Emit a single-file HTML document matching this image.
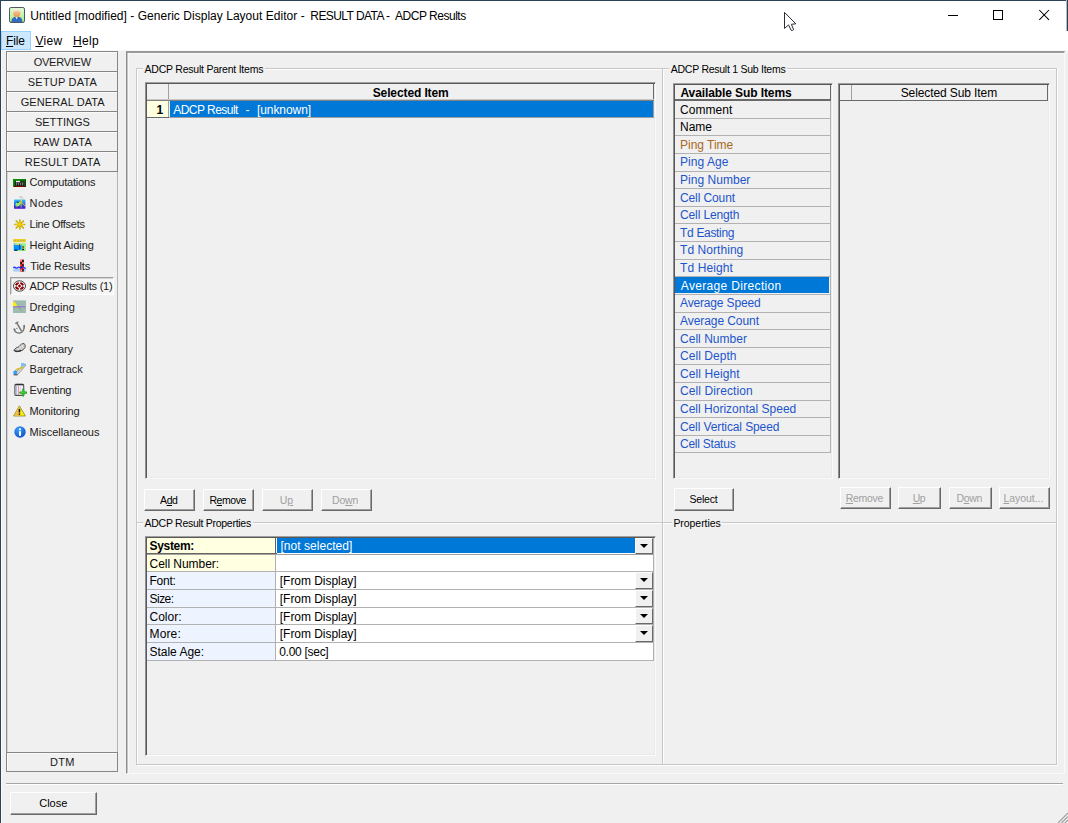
<!DOCTYPE html>
<html><head><meta charset="utf-8"><title>Generic Display Layout Editor</title>
<style>
html,body{margin:0;padding:0;}
body{width:1068px;height:823px;overflow:hidden;background:#f0f0f0;font-family:"Liberation Sans",sans-serif;font-size:12px;color:#000;position:relative;}
div,span{position:absolute;box-sizing:border-box;white-space:nowrap;}
u{text-decoration:underline;text-underline-offset:1px;}
.nb{left:6px;width:112px;height:20px;border:1px solid #858585;background:#f0f0f0;box-shadow:inset 1px 1px 0 #fafafa;}
.hl{height:1px;background:#dcdcdc;}
.vl{width:1px;background:#dcdcdc;}
.btn{height:22px;background:#f0f0f0;border-top:1px solid #fff;border-left:1px solid #fff;border-right:1px solid #696969;border-bottom:1px solid #696969;box-shadow:inset -1px -1px 0 #a0a0a0;}
.grid{border-top:1px solid #a0a0a0;border-left:1px solid #909090;border-right:1px solid #fafafa;border-bottom:1px solid #fafafa;background:#f0f0f0;box-shadow:inset 1px 1px 0 #585858,inset -1px -1px 0 #eaeaea;}
.x{line-height:16px;height:16px;}
</style></head>
<body>
<div style="left:0;top:0;width:1068px;height:50px;background:#fff;"></div>
<div style="left:0;top:50px;width:1068px;height:1px;background:#f8f8f8;"></div>
<div style="left:0;top:0;width:1068px;height:1px;background:#2b4257;"></div>
<div style="left:0;top:0;width:1px;height:823px;background:#2b4257;"></div>
<div style="left:1066px;top:0;width:1px;height:31px;background:#b4bcc4;"></div>
<div style="left:1067px;top:0;width:1px;height:31px;background:#2b4257;"></div>
<svg style="position:absolute;left:9px;top:7px" width="16" height="16" viewBox="0 0 16 16"><defs><linearGradient id="ag" x1="0" y1="0" x2="0" y2="1"><stop offset="0" stop-color="#e4fbd6"/><stop offset="1" stop-color="#a4ee84"/></linearGradient><linearGradient id="ah" x1="0" y1="0" x2="0" y2="1"><stop offset="0" stop-color="#f3e4d3"/><stop offset="0.45" stop-color="#f6b47c"/><stop offset="1" stop-color="#ee9550"/></linearGradient></defs><rect x="0.5" y="0.5" width="15" height="15" rx="1.6" fill="url(#ag)" stroke="#4d5866" stroke-width="1"/><path d="M2.2 15 Q2.6 10.4 6.4 9.8 L9.6 9.8 Q13.2 10.4 13.6 15 Z" fill="#336cbc"/><path d="M6.3 9.8 L7.6 12.6 L8.9 9.8 Z" fill="#e6eef8"/><ellipse cx="7.8" cy="6.2" rx="3.5" ry="3.9" fill="url(#ah)"/><path d="M4.3 5 Q4.6 1.8 7.8 1.8 Q11 1.8 11.3 5 Q9.6 3.7 7.8 3.9 Q6 3.7 4.3 5Z" fill="#efe8de"/></svg>
<div class="x" style="left:30.3px;top:7.7px;letter-spacing:0.03px;">Untitled [modified] - Generic Display Layout Editor -</div>
<div class="x" style="left:310.3px;top:7.7px;letter-spacing:-0.57px;">RESULT DATA -</div>
<div class="x" style="left:395.0px;top:7.7px;letter-spacing:-0.48px;">ADCP Results</div>
<div style="left:948px;top:15px;width:10px;height:1px;background:#000;"></div>
<div style="left:993px;top:10px;width:10px;height:10px;border:1px solid #000;"></div>
<svg style="position:absolute;left:1038px;top:8px" width="13" height="13" viewBox="1038 8 13 13"><path d="M1039.3 10 L1049 19.8 M1049 10 L1039.3 19.8" stroke="#000" stroke-width="1.05" fill="none"/></svg>
<svg style="position:absolute;left:780px;top:8px" width="20" height="26" viewBox="780 8 20 26"><path d="M784.5 12.4 L784.5 28.4 L788.6 24.9 L791.1 30.3 Q792.4 30.9 793.6 29.7 L791.4 24.3 L795.8 23.8 Z" fill="#fff" stroke="#14141e" stroke-width="0.9" stroke-linejoin="round"/></svg>
<div style="left:1px;top:31px;width:30px;height:19px;background:#cce8ff;border:1px solid #99d1ff;"></div>
<div class="x" style="left:6.0px;top:33.4px;letter-spacing:-0.15px;"><u>F</u>ile</div>
<div class="x" style="left:35.4px;top:33.4px;letter-spacing:0.33px;"><u>V</u>iew</div>
<div class="x" style="left:72.9px;top:33.4px;letter-spacing:0.37px;"><u>H</u>elp</div>
<div class="nb" style="top:51px;height:21px;"></div>
<div class="x" style="left:33.7px;top:54.1px;font-size:11px;color:#1a1a1a;letter-spacing:-0.24px;">OVERVIEW</div>
<div class="nb" style="top:71px;height:21px;"></div>
<div class="x" style="left:27.8px;top:74.1px;font-size:11px;color:#1a1a1a;letter-spacing:0.21px;">SETUP DATA</div>
<div class="nb" style="top:91px;height:21px;"></div>
<div class="x" style="left:20.7px;top:94.1px;font-size:11px;color:#1a1a1a;letter-spacing:0.10px;">GENERAL DATA</div>
<div class="nb" style="top:111px;height:21px;"></div>
<div class="x" style="left:34.9px;top:114.1px;font-size:11px;color:#1a1a1a;letter-spacing:-0.02px;">SETTINGS</div>
<div class="nb" style="top:131px;height:21px;"></div>
<div class="x" style="left:33.4px;top:134.1px;font-size:11px;color:#1a1a1a;letter-spacing:0.33px;">RAW DATA</div>
<div class="nb" style="top:151px;height:21px;"></div>
<div class="x" style="left:24.7px;top:154.1px;font-size:11px;color:#1a1a1a;letter-spacing:0.25px;">RESULT DATA</div>
<div class="nb" style="top:752px;"></div>
<div class="x" style="left:49.9px;top:754.1px;font-size:11px;color:#1a1a1a;letter-spacing:0.34px;">DTM</div>
<div style="left:1px;top:51px;width:1px;height:772px;background:#fafafa;"></div>
<div style="left:6px;top:172px;width:1px;height:580px;background:#8e8e8e;"></div>
<div style="left:7px;top:172px;width:1px;height:580px;background:#d4d4d4;"></div>
<div style="left:117px;top:172px;width:1px;height:580px;background:#b4b4b4;"></div>
<svg style="position:absolute;left:13px;top:179px" width="13" height="8" viewBox="0 0 13 8"><rect x="0" y="0" width="13" height="8" fill="#009000"/><rect x="1.8" y="1.7" width="9.6" height="5.2" fill="#0a0a0a"/><rect x="12.2" y="0.6" width="0.8" height="7.4" fill="#202020"/><rect x="1" y="7" width="11.4" height="1" fill="#800000"/><rect x="2.8" y="1.8" width="4.4" height="1.5" fill="#f0f0f0"/><rect x="8.2" y="2.6" width="2.6" height="0.8" fill="#808040"/><path d="M2.8 4.3 H10.8 M2.8 5.8 H10.8" stroke="#b0b0b0" stroke-width="0.9" stroke-dasharray="1.3 0.8"/></svg>
<div class="x" style="left:29.6px;top:174.3px;font-size:11px;color:#202020;letter-spacing:-0.18px;">Computations</div>
<svg style="position:absolute;left:13px;top:196px" width="13" height="13" viewBox="0 0 13 13"><defs><linearGradient id="ng" x1="0" y1="0" x2="0" y2="1"><stop offset="0" stop-color="#30c8ff"/><stop offset="0.55" stop-color="#2860e8"/><stop offset="1" stop-color="#2a10c8"/></linearGradient></defs><rect x="1" y="3.4" width="11.4" height="9" rx="0.8" fill="url(#ng)"/><rect x="1" y="11.6" width="11.4" height="1" fill="#6a20d8"/><path d="M2.2 9.8 Q2.6 6 5 6.4 Q7 5.4 8 7.2 L6 10.2 Z" fill="#80f080"/><path d="M3.2 11.4 L7.8 6.4 L8.2 3.4 L8.7 6.4 L12.4 10.4 M8.2 4 V11.6" stroke="#f0d020" stroke-width="0.85" fill="none"/><path d="M6.6 0.8 Q9 0.6 10.2 2.6" stroke="#a0a0a0" stroke-width="0.8" fill="none"/><rect x="3.6" y="5.8" width="2" height="0.9" fill="#101010"/></svg>
<div class="x" style="left:29.6px;top:195.1px;font-size:11px;color:#202020;letter-spacing:0.35px;">Nodes</div>
<svg style="position:absolute;left:14px;top:219px" width="12" height="11" viewBox="0 0 12 11"><g stroke="#b0a000" stroke-width="1.5" stroke-linecap="round"><path d="M5.8 0.9 V10.1 M0.9 5.5 H10.7 M2.2 2 L9.4 9 M9.4 2 L2.2 9"/></g><g stroke="#f0d000" stroke-width="0.9" stroke-linecap="round"><path d="M5.8 1.6 V9.4 M1.6 5.5 H10 M2.8 2.6 L8.8 8.4 M8.8 2.6 L2.8 8.4"/></g><circle cx="5.6" cy="5.4" r="1.8" fill="#f8c800"/></svg>
<div class="x" style="left:29.6px;top:215.9px;font-size:11px;color:#202020;letter-spacing:-0.29px;">Line Offsets</div>
<svg style="position:absolute;left:13px;top:239px" width="13" height="13" viewBox="0 0 13 13"><rect x="0" y="0" width="13" height="3.2" rx="1" fill="#e8d020"/><path d="M1.5 1.6 H11.5" stroke="#c0a878" stroke-width="1" stroke-dasharray="1.6 1.2"/><rect x="0.8" y="4.4" width="12" height="7.6" fill="#90f088"/><path d="M0.8 6 Q3 5.2 5 6 T8.6 5.4 L8.6 10.8 L2 11.6 L0.8 11.4Z" fill="#0090ff"/><rect x="0.8" y="4.4" width="1.2" height="1.2" fill="#40a0ff"/><path d="M2 5.6 H7.4" stroke="#e8d040" stroke-width="0.9"/><rect x="6" y="5.2" width="0.8" height="5" fill="#203080"/><rect x="9.2" y="7" width="1.8" height="2.6" fill="#a06020"/><rect x="9" y="10" width="2" height="1.2" fill="#202020"/><rect x="1.4" y="10.6" width="3" height="1.2" fill="#101050"/></svg>
<div class="x" style="left:29.6px;top:236.7px;font-size:11px;color:#202020;letter-spacing:-0.04px;">Height Aiding</div>
<svg style="position:absolute;left:13px;top:259px" width="13" height="13" viewBox="0 0 13 13"><rect x="0.4" y="9.2" width="12.4" height="3.4" fill="#a8d0f4"/><rect x="7.2" y="0.6" width="3.6" height="12" fill="#ff2020"/><g fill="#202020"><rect x="9" y="0.8" width="1.8" height="2.2"/><rect x="7.2" y="3" width="1.8" height="2.2"/><rect x="9" y="5.2" width="1.8" height="2.2"/><rect x="7.2" y="7.4" width="1.8" height="1.6"/><rect x="9" y="10.2" width="1.8" height="2.2"/></g><g fill="#ffffff"><rect x="7.8" y="1.2" width="1" height="1"/><rect x="9.4" y="3.6" width="1" height="1"/><rect x="7.8" y="10.8" width="1" height="1"/></g><path d="M0.4 9 Q1.4 7.4 2.4 8.6 T4.6 8.6 T6.8 8.6 T9 8.6 T11.2 8.6 T12.8 8.8" stroke="#2020ff" stroke-width="1.2" fill="none"/></svg>
<div class="x" style="left:30.2px;top:257.5px;font-size:11px;color:#202020;letter-spacing:-0.05px;">Tide Results</div>
<div style="left:10px;top:277px;width:104px;height:18px;background:#f5f5f5;border-top:1px solid #a0a0a0;border-left:1px solid #a0a0a0;border-right:1px solid #fff;border-bottom:1px solid #fff;box-shadow:inset 1px 1px 0 #d4d4d4;"></div>
<svg style="position:absolute;left:13px;top:280px" width="13" height="12" viewBox="0 0 13 12"><ellipse cx="6.5" cy="6" rx="6" ry="5.2" fill="#fff" stroke="#404040" stroke-width="1"/><g fill="#8c0000"><path d="M1.9 5 Q2.4 2.6 5.4 1.9 L6 3.6 L3.6 5.8Z"/><path d="M11.1 5 Q10.6 2.6 7.6 1.9 L7 3.6 L9.4 5.8Z"/><path d="M1.9 7 Q2.4 9.4 5.4 10.1 L6 8.4 L3.6 6.2Z"/><path d="M11.1 7 Q10.6 9.4 7.6 10.1 L7 8.4 L9.4 6.2Z"/><path d="M6.5 4.3 L8.2 6 L6.5 7.7 L4.8 6Z"/></g></svg>
<div class="x" style="left:29.6px;top:278.3px;font-size:11px;color:#202020;letter-spacing:-0.24px;">ADCP Results (1)</div>
<svg style="position:absolute;left:13px;top:300px" width="13" height="13" viewBox="0 0 13 13"><rect x="0" y="0.4" width="13" height="12.6" fill="#9cbcb0"/><path d="M0 1.8 L1.8 1.8 L4.6 6.4 L0 6.6Z" fill="#f8f000"/><path d="M0 7.2 L5 6.6 L12.6 6.8" stroke="#a078d0" stroke-width="1.2" fill="none"/><path d="M5 6.8 L9 11" stroke="#80a060" stroke-width="1" fill="none"/><g fill="#c0b0c8"><rect x="2" y="2" width="1" height="1"/><rect x="6" y="3" width="1" height="1"/><rect x="9" y="2" width="1" height="1"/><rect x="3" y="9" width="1" height="1"/><rect x="8" y="9.6" width="1" height="1"/><rect x="10.6" y="4" width="1" height="1"/><rect x="11" y="10.6" width="1" height="1"/><rect x="5.4" y="11" width="1" height="1"/></g></svg>
<div class="x" style="left:29.6px;top:299.1px;font-size:11px;color:#202020;letter-spacing:0.08px;">Dredging</div>
<svg style="position:absolute;left:13px;top:321px" width="13" height="14" viewBox="0 0 13 14"><g fill="none" stroke="#7c7c7c" stroke-linecap="round"><path d="M3.6 1.6 Q5.4 4.6 8.2 9.6" stroke-width="1.6"/><path d="M1.2 8.2 Q2.6 12.6 7 12 Q11.2 11 11.4 4.6" stroke-width="1.5"/><path d="M2.6 2.4 L5 1" stroke-width="1.2"/></g><path d="M10.6 3.6 L12.2 6.4 L10.4 6.6Z M0.6 7.6 L2.8 8 L1.4 10Z" fill="#707070"/><circle cx="3.9" cy="7.4" r="0.7" fill="#808080"/></svg>
<div class="x" style="left:29.6px;top:319.9px;font-size:11px;color:#202020;letter-spacing:-0.16px;">Anchors</div>
<svg style="position:absolute;left:13px;top:342px" width="13" height="12" viewBox="0 0 13 12"><path d="M0.8 8.4 Q2.4 5.6 6 4.6 Q8 1.2 11 1.4 Q13 3 12 5.6 Q10.6 8.4 7 9.2 Q3 10.6 0.8 8.4Z" fill="#c8c8c8" stroke="#585858" stroke-width="1"/><path d="M1.6 8.8 Q4.6 10 8.2 8.4" stroke="#303030" stroke-width="1.2" fill="none"/><path d="M4.4 6 L5.6 8 M6.6 4.6 L8 7 M8.6 2.8 L10 5.6" stroke="#f4f4f4" stroke-width="0.9"/></svg>
<div class="x" style="left:29.6px;top:340.6px;font-size:11px;color:#202020;letter-spacing:-0.18px;">Catenary</div>
<svg style="position:absolute;left:13px;top:362px" width="13" height="14" viewBox="0 0 13 14"><path d="M1 12.6 L4.4 12.8 L12.2 4 L12.6 2.2 L10 3.4 L4 9Z" fill="#d8d8d0" stroke="#8a8a80" stroke-width="0.8"/><path d="M2 8.8 Q4.6 6.2 7 6.2 Q9 6 10 4.2" stroke="#d8c020" stroke-width="1.4" fill="none"/><rect x="8" y="1" width="3.6" height="3.4" fill="#80c0f8"/><circle cx="2.2" cy="10.4" r="2" fill="#30a0ff"/><path d="M0.6 12.8 H4.6" stroke="#404040" stroke-width="0.9"/></svg>
<div class="x" style="left:29.6px;top:361.4px;font-size:11px;color:#202020;letter-spacing:-0.00px;">Bargetrack</div>
<svg style="position:absolute;left:14px;top:383px" width="13" height="14" viewBox="0 0 13 14"><rect x="0.9" y="1.4" width="8.8" height="11" rx="1" fill="#eef4fb" stroke="#505050" stroke-width="1.1"/><path d="M1.4 1.6 H9.2" stroke="#303030" stroke-width="1.4"/><path d="M4.4 2.6 V12" stroke="#f08080" stroke-width="0.9"/><path d="M2.4 2.6 V12" stroke="#a0a8e8" stroke-width="0.8"/><path d="M6.6 2.6 V8" stroke="#c8d8f0" stroke-width="0.9"/><path d="M9.2 6.6 V12.6 M6.2 9.6 H12.2" stroke="#20a020" stroke-width="2.2" stroke-linecap="round"/><path d="M9 7 V12 M6.8 9.4 H11.6" stroke="#50d040" stroke-width="0.9" stroke-linecap="round"/></svg>
<div class="x" style="left:29.6px;top:382.2px;font-size:11px;color:#202020;letter-spacing:-0.13px;">Eventing</div>
<svg style="position:absolute;left:13px;top:405px" width="13" height="12" viewBox="0 0 13 12"><path d="M6.4 0.8 L12.4 11 L0.6 11Z" fill="#f8f000" stroke="#98903c" stroke-width="0.9" stroke-linejoin="round"/><path d="M6.4 1.2 L6.4 10.6 L1.2 10.6Z" fill="#f8b850"/><rect x="5.7" y="3.8" width="1.5" height="3.8" rx="0.6" fill="#101010"/><rect x="5.7" y="8.4" width="1.5" height="1.4" fill="#101010"/></svg>
<div class="x" style="left:29.6px;top:403.0px;font-size:11px;color:#202020;letter-spacing:-0.14px;">Monitoring</div>
<svg style="position:absolute;left:14px;top:426px" width="12" height="12" viewBox="0 0 12 12"><defs><radialGradient id="mg" cx="0.4" cy="0.3" r="0.8"><stop offset="0" stop-color="#3aa0ff"/><stop offset="1" stop-color="#0848c8"/></radialGradient></defs><circle cx="6" cy="6" r="5.7" fill="url(#mg)"/><rect x="5" y="2.4" width="2" height="1.8" fill="#fff"/><rect x="5" y="5.2" width="2" height="4.6" fill="#fff"/></svg>
<div class="x" style="left:29.6px;top:423.8px;font-size:11px;color:#202020;letter-spacing:0.01px;">Miscellaneous</div>
<div style="left:126px;top:51px;width:939px;height:723px;border-top:2px solid #9a9a9a;border-left:1px solid #8e8e8e;border-right:1px solid #fafafa;border-bottom:1px solid #fafafa;box-shadow:inset 1px 0 0 #c4c4c4, inset 2px 1px 0 #f8f8f8;"></div>
<div style="left:136px;top:68px;width:527px;height:455px;border:1px solid #c8c8c8;box-shadow:1px 1px 0 #fcfcfc,inset 1px 1px 0 #fcfcfc;"></div>
<div style="left:143px;top:68px;width:122px;height:2px;background:#f0f0f0;"></div>
<div class="x" style="left:144.6px;top:61.2px;font-size:10.5px;letter-spacing:-0.23px;">ADCP Result Parent Items</div>
<div style="left:136px;top:522px;width:527px;height:243px;border:1px solid #c8c8c8;box-shadow:1px 1px 0 #fcfcfc,inset 1px 1px 0 #fcfcfc;"></div>
<div style="left:143px;top:522px;width:110px;height:2px;background:#f0f0f0;"></div>
<div class="x" style="left:144.6px;top:515.2px;font-size:10.5px;letter-spacing:-0.28px;">ADCP Result Properties</div>
<div style="left:662px;top:68px;width:395px;height:455px;border:1px solid #c8c8c8;box-shadow:1px 1px 0 #fcfcfc,inset 1px 1px 0 #fcfcfc;"></div>
<div style="left:669px;top:68px;width:118px;height:2px;background:#f0f0f0;"></div>
<div class="x" style="left:670.8px;top:61.2px;font-size:10.5px;letter-spacing:-0.26px;">ADCP Result 1 Sub Items</div>
<div style="left:662px;top:522px;width:395px;height:243px;border:1px solid #c8c8c8;box-shadow:1px 1px 0 #fcfcfc,inset 1px 1px 0 #fcfcfc;"></div>
<div style="left:672px;top:522px;width:50px;height:2px;background:#f0f0f0;"></div>
<div class="x" style="left:673.4px;top:515.2px;font-size:10.5px;letter-spacing:-0.05px;">Properties</div>
<div class="grid" style="left:145px;top:82px;width:511px;height:397px;"></div>
<div style="left:653px;top:84px;width:1px;height:17px;background:#696969;"></div>
<div style="left:653px;top:101px;width:1px;height:17px;background:#a0a0a0;"></div>
<div style="left:168px;top:84px;width:1px;height:34px;background:#a0a0a0;"></div>
<div style="left:147px;top:100px;width:507px;height:1px;background:#808080;"></div>
<div style="left:147px;top:99px;width:507px;height:1px;background:#c8c8c8;"></div>
<div class="x" style="left:372.7px;top:85.1px;font-weight:bold;letter-spacing:-0.11px;">Selected Item</div>
<div style="left:147px;top:101px;width:21px;height:16px;background:#ffffe1;"></div>
<div style="left:147px;top:117px;width:22px;height:1px;background:#696969;"></div>
<div class="x" style="left:156.4px;top:101.9px;font-weight:bold;letter-spacing:0.00px;">1</div>
<div style="left:170px;top:101px;width:483px;height:16px;background:#0078d7;"></div>
<div style="left:169px;top:117px;width:485px;height:1px;background:#a0a0a0;"></div>
<div class="x" style="left:173.2px;top:101.9px;color:#fff;letter-spacing:-0.53px;">ADCP Result</div>
<div class="x" style="left:245.4px;top:101.9px;color:#fff;letter-spacing:0.00px;">-</div>
<div class="x" style="left:256.9px;top:101.9px;color:#fff;letter-spacing:-0.05px;">[unknown]</div>
<div class="btn" style="left:144px;top:489px;width:51px;height:22px;"></div>
<div class="x" style="left:160.1px;top:491.6px;font-size:10.5px;letter-spacing:-0.45px;">A<u>d</u>d</div>
<div class="btn" style="left:203px;top:489px;width:51px;height:22px;"></div>
<div class="x" style="left:209.4px;top:491.6px;font-size:10.5px;letter-spacing:-0.42px;">R<u>e</u>move</div>
<div class="btn" style="left:262px;top:489px;width:51px;height:22px;"></div>
<div class="x" style="left:279.8px;top:491.6px;font-size:10.5px;color:#a0a0a0;letter-spacing:-0.04px;">U<u>p</u></div>
<div class="btn" style="left:321px;top:489px;width:51px;height:22px;"></div>
<div class="x" style="left:332.0px;top:491.6px;font-size:10.5px;color:#a0a0a0;letter-spacing:-0.16px;">Do<u>w</u>n</div>
<div class="btn" style="left:674px;top:488px;width:60px;height:23px;"></div>
<div class="x" style="left:689.4px;top:491.1px;font-size:10.5px;letter-spacing:-0.16px;">Select</div>
<div class="btn" style="left:840px;top:487px;width:51px;height:22px;"></div>
<div class="x" style="left:845.7px;top:489.6px;font-size:10.5px;color:#a0a0a0;letter-spacing:-0.28px;"><u>R</u>emove</div>
<div class="btn" style="left:898px;top:487px;width:43px;height:22px;"></div>
<div class="x" style="left:912.7px;top:489.6px;font-size:10.5px;color:#a0a0a0;letter-spacing:-0.44px;"><u>U</u>p</div>
<div class="btn" style="left:949px;top:487px;width:43px;height:22px;"></div>
<div class="x" style="left:956.4px;top:489.6px;font-size:10.5px;color:#a0a0a0;letter-spacing:-0.29px;">D<u>o</u>wn</div>
<div class="btn" style="left:999px;top:487px;width:51px;height:22px;"></div>
<div class="x" style="left:1003.4px;top:489.6px;font-size:10.5px;color:#a0a0a0;letter-spacing:-0.04px;"><u>L</u>ayout...</div>
<div class="grid" style="left:673px;top:83px;width:160px;height:396px;"></div>
<div style="left:675px;top:85px;width:156px;height:16px;border-right:1px solid #696969;border-bottom:2px solid #696969;"></div>
<div class="x" style="left:680.5px;top:85.1px;font-weight:bold;letter-spacing:-0.10px;">Available Sub Items</div>
<div style="left:675px;top:118px;width:156px;height:1px;background:#b2b2b2;"></div>
<div class="x" style="left:680.0px;top:101.5px;letter-spacing:0.05px;">Comment</div>
<div style="left:675px;top:135px;width:156px;height:1px;background:#b2b2b2;"></div>
<div class="x" style="left:680.0px;top:119.2px;letter-spacing:-0.01px;">Name</div>
<div style="left:675px;top:153px;width:156px;height:1px;background:#b2b2b2;"></div>
<div class="x" style="left:680.0px;top:136.8px;color:#a96a1e;letter-spacing:-0.02px;">Ping Time</div>
<div style="left:675px;top:171px;width:156px;height:1px;background:#b2b2b2;"></div>
<div class="x" style="left:680.0px;top:154.4px;color:#1d55cc;letter-spacing:0.05px;">Ping Age</div>
<div style="left:675px;top:188px;width:156px;height:1px;background:#b2b2b2;"></div>
<div class="x" style="left:680.0px;top:172.0px;color:#1d55cc;letter-spacing:0.03px;">Ping Number</div>
<div style="left:675px;top:206px;width:156px;height:1px;background:#b2b2b2;"></div>
<div class="x" style="left:680.0px;top:189.6px;color:#1d55cc;letter-spacing:-0.11px;">Cell Count</div>
<div style="left:675px;top:223px;width:156px;height:1px;background:#b2b2b2;"></div>
<div class="x" style="left:680.0px;top:207.2px;color:#1d55cc;letter-spacing:-0.12px;">Cell Length</div>
<div style="left:675px;top:241px;width:156px;height:1px;background:#b2b2b2;"></div>
<div class="x" style="left:680.0px;top:224.8px;color:#1d55cc;letter-spacing:-0.32px;">Td Easting</div>
<div style="left:675px;top:259px;width:156px;height:1px;background:#b2b2b2;"></div>
<div class="x" style="left:680.0px;top:242.4px;color:#1d55cc;letter-spacing:0.06px;">Td Northing</div>
<div style="left:675px;top:276px;width:156px;height:1px;background:#b2b2b2;"></div>
<div class="x" style="left:680.0px;top:260.0px;color:#1d55cc;letter-spacing:0.10px;">Td Height</div>
<div style="left:675px;top:277px;width:154px;height:16px;background:#0078d7;"></div>
<div style="left:675px;top:294px;width:156px;height:1px;background:#b2b2b2;"></div>
<div class="x" style="left:680.8px;top:278.2px;color:#fff;letter-spacing:0.33px;">Average Direction</div>
<div style="left:675px;top:312px;width:156px;height:1px;background:#b2b2b2;"></div>
<div class="x" style="left:680.0px;top:295.3px;color:#1d55cc;letter-spacing:-0.16px;">Average Speed</div>
<div style="left:675px;top:329px;width:156px;height:1px;background:#b2b2b2;"></div>
<div class="x" style="left:680.0px;top:312.9px;color:#1d55cc;letter-spacing:-0.07px;">Average Count</div>
<div style="left:675px;top:347px;width:156px;height:1px;background:#b2b2b2;"></div>
<div class="x" style="left:680.0px;top:330.5px;color:#1d55cc;letter-spacing:0.03px;">Cell Number</div>
<div style="left:675px;top:364px;width:156px;height:1px;background:#b2b2b2;"></div>
<div class="x" style="left:680.0px;top:348.1px;color:#1d55cc;letter-spacing:0.05px;">Cell Depth</div>
<div style="left:675px;top:382px;width:156px;height:1px;background:#b2b2b2;"></div>
<div class="x" style="left:680.0px;top:365.7px;color:#1d55cc;letter-spacing:0.08px;">Cell Height</div>
<div style="left:675px;top:400px;width:156px;height:1px;background:#b2b2b2;"></div>
<div class="x" style="left:680.0px;top:383.3px;color:#1d55cc;letter-spacing:0.10px;">Cell Direction</div>
<div style="left:675px;top:417px;width:156px;height:1px;background:#b2b2b2;"></div>
<div class="x" style="left:680.0px;top:400.9px;color:#1d55cc;letter-spacing:0.01px;">Cell Horizontal Speed</div>
<div style="left:675px;top:435px;width:156px;height:1px;background:#b2b2b2;"></div>
<div class="x" style="left:680.0px;top:418.5px;color:#1d55cc;letter-spacing:-0.11px;">Cell Vertical Speed</div>
<div style="left:675px;top:452px;width:156px;height:1px;background:#b2b2b2;"></div>
<div class="x" style="left:680.0px;top:436.1px;color:#1d55cc;letter-spacing:-0.24px;">Cell Status</div>
<div style="left:830px;top:101px;width:1px;height:351px;background:#b2b2b2;"></div>
<div class="grid" style="left:838px;top:83px;width:212px;height:396px;"></div>
<div style="left:840px;top:85px;width:208px;height:16px;border-right:1px solid #696969;border-bottom:1px solid #696969;"></div>
<div style="left:851px;top:85px;width:1px;height:15px;background:#a0a0a0;"></div>
<div class="x" style="left:900.7px;top:85.1px;letter-spacing:-0.10px;">Selected Sub Item</div>
<div class="grid" style="left:145px;top:536px;width:511px;height:220px;"></div>
<div style="left:147px;top:538px;width:128px;height:16px;background:#ffffe1;"></div>
<div style="left:276px;top:538px;width:377px;height:16px;background:#fff;"></div>
<div style="left:277px;top:538px;width:358px;height:15px;background:#0078d7;"></div>
<div class="x" style="left:149.5px;top:538.0px;font-weight:bold;letter-spacing:-0.31px;">System:</div>
<div class="x" style="left:280.5px;top:538.0px;color:#fff;letter-spacing:0.03px;">[not selected]</div>
<div style="left:147px;top:553px;width:130px;height:1px;background:#666;"></div>
<div style="left:147px;top:554px;width:130px;height:1px;background:#a4a49c;"></div>
<div style="left:277px;top:554px;width:377px;height:1px;background:#a0a0a0;"></div>
<div style="left:275px;top:538px;width:1px;height:16px;background:#606060;"></div>
<div style="left:635px;top:538px;width:18px;height:16px;background:#f0f0f0;border-top:1px solid #fff;border-left:1px solid #fff;border-right:1px solid #696969;border-bottom:1px solid #696969;"></div>
<svg style="position:absolute;left:640px;top:544px" width="8" height="4" viewBox="0 0 8 4"><path d="M0 0 H8 L4 4Z" fill="#000"/></svg>
<div style="left:147px;top:555px;width:128px;height:16px;background:#ffffe1;"></div>
<div style="left:276px;top:555px;width:377px;height:16px;background:#fff;"></div>
<div class="x" style="left:149.5px;top:555.6px;letter-spacing:-0.04px;">Cell Number:</div>
<div style="left:147px;top:571px;width:507px;height:1px;background:#b2b2b2;"></div>
<div style="left:147px;top:572px;width:128px;height:17px;background:#eef4ff;"></div>
<div style="left:276px;top:572px;width:377px;height:17px;background:#fff;"></div>
<div class="x" style="left:149.5px;top:573.2px;letter-spacing:-0.24px;">Font:</div>
<div class="x" style="left:279.8px;top:573.2px;letter-spacing:-0.04px;">[From Display]</div>
<div style="left:147px;top:589px;width:507px;height:1px;background:#b2b2b2;"></div>
<div style="left:635px;top:572px;width:18px;height:17px;background:#f0f0f0;border-top:1px solid #fff;border-left:1px solid #fff;border-right:1px solid #696969;border-bottom:1px solid #696969;"></div>
<svg style="position:absolute;left:640px;top:578px" width="8" height="4" viewBox="0 0 8 4"><path d="M0 0 H8 L4 4Z" fill="#000"/></svg>
<div style="left:147px;top:590px;width:128px;height:17px;background:#eef4ff;"></div>
<div style="left:276px;top:590px;width:377px;height:17px;background:#fff;"></div>
<div class="x" style="left:149.5px;top:590.8px;letter-spacing:-0.52px;">Size:</div>
<div class="x" style="left:279.8px;top:590.8px;letter-spacing:-0.04px;">[From Display]</div>
<div style="left:147px;top:607px;width:507px;height:1px;background:#b2b2b2;"></div>
<div style="left:635px;top:590px;width:18px;height:17px;background:#f0f0f0;border-top:1px solid #fff;border-left:1px solid #fff;border-right:1px solid #696969;border-bottom:1px solid #696969;"></div>
<svg style="position:absolute;left:640px;top:596px" width="8" height="4" viewBox="0 0 8 4"><path d="M0 0 H8 L4 4Z" fill="#000"/></svg>
<div style="left:147px;top:608px;width:128px;height:16px;background:#eef4ff;"></div>
<div style="left:276px;top:608px;width:377px;height:16px;background:#fff;"></div>
<div class="x" style="left:149.5px;top:608.5px;letter-spacing:-0.00px;">Color:</div>
<div class="x" style="left:279.8px;top:608.5px;letter-spacing:-0.04px;">[From Display]</div>
<div style="left:147px;top:624px;width:507px;height:1px;background:#b2b2b2;"></div>
<div style="left:635px;top:608px;width:18px;height:16px;background:#f0f0f0;border-top:1px solid #fff;border-left:1px solid #fff;border-right:1px solid #696969;border-bottom:1px solid #696969;"></div>
<svg style="position:absolute;left:640px;top:614px" width="8" height="4" viewBox="0 0 8 4"><path d="M0 0 H8 L4 4Z" fill="#000"/></svg>
<div style="left:147px;top:625px;width:128px;height:17px;background:#eef4ff;"></div>
<div style="left:276px;top:625px;width:377px;height:17px;background:#fff;"></div>
<div class="x" style="left:149.5px;top:626.1px;letter-spacing:0.15px;">More:</div>
<div class="x" style="left:279.8px;top:626.1px;letter-spacing:-0.04px;">[From Display]</div>
<div style="left:147px;top:642px;width:507px;height:1px;background:#b2b2b2;"></div>
<div style="left:635px;top:625px;width:18px;height:17px;background:#f0f0f0;border-top:1px solid #fff;border-left:1px solid #fff;border-right:1px solid #696969;border-bottom:1px solid #696969;"></div>
<svg style="position:absolute;left:640px;top:631px" width="8" height="4" viewBox="0 0 8 4"><path d="M0 0 H8 L4 4Z" fill="#000"/></svg>
<div style="left:147px;top:643px;width:128px;height:17px;background:#eef4ff;"></div>
<div style="left:276px;top:643px;width:377px;height:17px;background:#fff;"></div>
<div class="x" style="left:149.5px;top:643.7px;letter-spacing:-0.02px;">Stale Age:</div>
<div class="x" style="left:279.2px;top:643.7px;letter-spacing:-0.28px;">0.00 [sec]</div>
<div style="left:147px;top:660px;width:507px;height:1px;background:#b2b2b2;"></div>
<div style="left:275px;top:555px;width:1px;height:105px;background:#b0b0b0;"></div>
<div style="left:653px;top:538px;width:1px;height:123px;background:#b0b0b0;"></div>
<div style="left:6px;top:783px;width:1057px;height:1px;background:#a6a6a6;"></div>
<div style="left:6px;top:784px;width:1057px;height:1px;background:#fff;"></div>
<div class="btn" style="left:10px;top:792px;width:87px;height:23px;"></div>
<div class="x" style="left:39.3px;top:795.4px;font-size:11px;letter-spacing:-0.03px;">Close</div>
<svg style="position:absolute;left:1055px;top:810px" width="13" height="13" viewBox="0 0 13 13"><path d="M3 13 L13 3 M6.5 13 L13 6.5 M10 13 L13 10" stroke="#a0a0a0" stroke-width="1.2"/></svg>
</body></html>
